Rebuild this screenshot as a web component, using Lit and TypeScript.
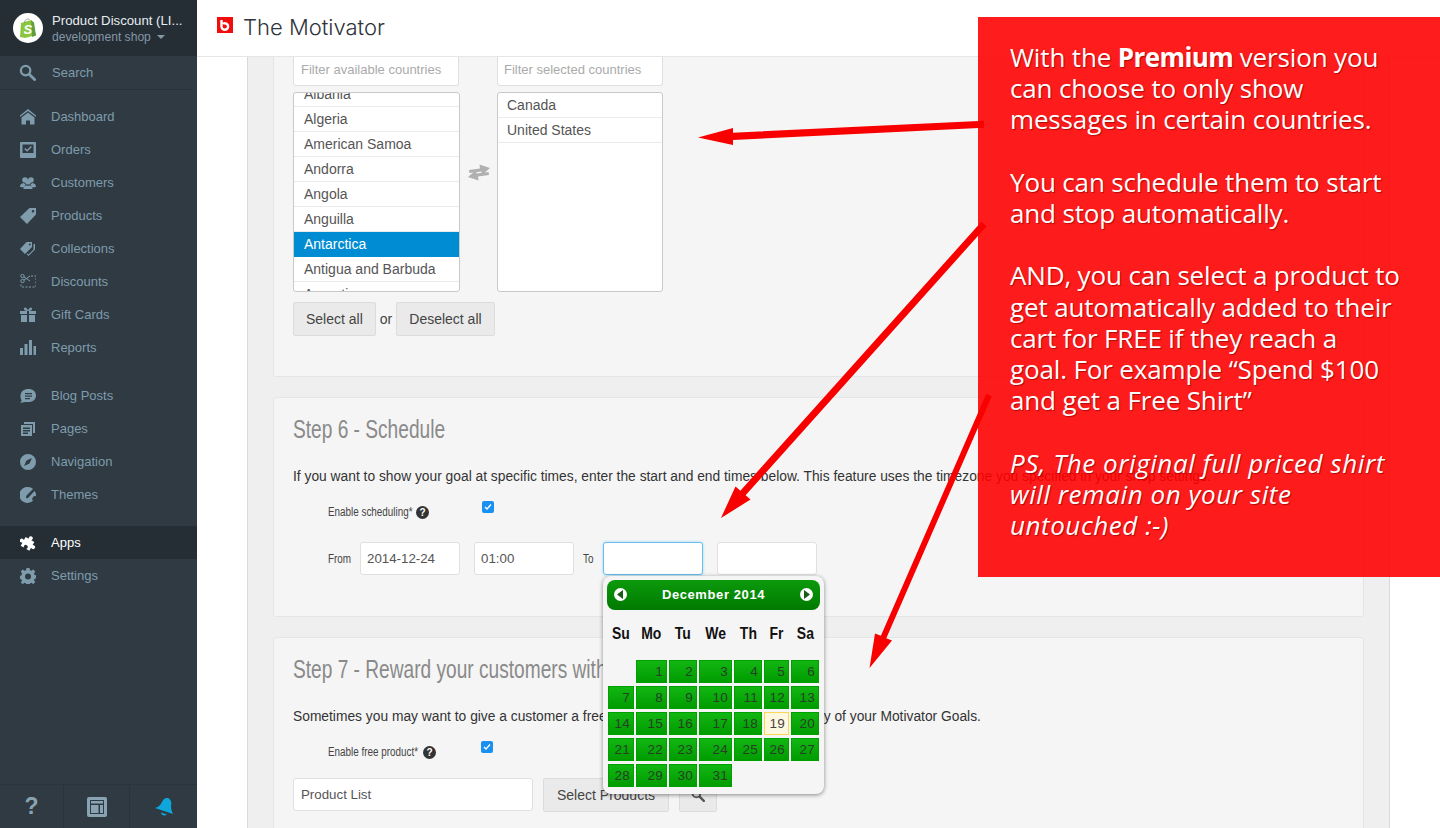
import { LitElement, html, css, svg } from "lit";
import { customElement } from "lit/decorators.js";

const I = {
  search: svg`<circle cx="7" cy="7" r="5" fill="none" stroke="currentColor" stroke-width="2.4"/><path d="M11 11l5.5 5.5" stroke="currentColor" stroke-width="3" stroke-linecap="round"/>`,
  home: svg`<path d="M8 0L0 6.500V8L8 2l8 6V6.500z"/><path d="M8 3.500L1.500 8.500V15.500h4.500v-4h4v4h4.500V8.500z"/>`,
  orders: svg`<path fill-rule="evenodd" d="M1 0h14a1 1 0 011 1v14a1 1 0 01-1 1H1a1 1 0 01-1-1V1a1 1 0 011-1zm1.500 2.500v8.500h11V2.500z"/><path d="M4.800 6.500l2.300 2.300 4.300-4.300" fill="none" stroke="currentColor" stroke-width="1.500"/>`,
  customers: svg`<circle cx="5" cy="5" r="2.800"/><circle cx="11" cy="5" r="2.800"/><path d="M0 12c0-3 2-3.500 3.500-4l1.500 1 1-.5C5 10 4.500 11 4.500 12.500zM16 12c0-3-2-3.500-3.500-4l-1.500 1-1-.5c1 1.500 1.500 2.500 1.500 4z"/><circle cx="8" cy="7" r="2.600"/><path d="M3.500 14c0-3 2.500-3.500 3-3.800l1.500.8 1.500-.8c.5.300 3 .8 3 3.800z"/>`,
  products: svg`<path fill-rule="evenodd" d="M9.500 0H16v6.500L7 16 0 9zM13 2a1.300 1.300 0 100 2.600A1.300 1.300 0 0013 2z"/>`,
  collections: svg`<path fill-rule="evenodd" d="M6.500 1H12v5l-7 7-5-5zM9.800 2.500a1 1 0 100 2 1 1 0 000-2z"/><path d="M13.500 3H15v5.500L8.500 15l-2-2 1-.5 1 1 5-5z"/>`,
  discounts: svg`<circle cx="2.500" cy="2" r="1.700" fill="none" stroke="currentColor"/><circle cx="2.500" cy="7" r="1.700" fill="none" stroke="currentColor"/><path d="M4 3l6 4M4 6l6-4" stroke="currentColor" fill="none"/><path d="M11 2h5v11H1v-3" fill="none" stroke="currentColor" stroke-dasharray="2 1.500"/>`,
  gift: svg`<path d="M0 4h7v3H0zM9 4h7v3H9zM1 8h6v7H1zM9 8h6v7H9z"/><path d="M8 4C6 4 3.500 3.500 4 1.500S7.500 1 8 4c.5-3 3.500-4.500 4-2.500S10 4 8 4z"/>`,
  reports: svg`<path d="M0 8h3v7H0zM4.500 4h3v11h-3zM9 0h3v15H9zM13.500 6H16v9h-2.500z"/>`,
  blog: svg`<path fill-rule="evenodd" d="M8.500 1C13 1 16 3.700 16 7.500S13 14 8.500 14H5l-5 1c1.500-1 1.500-2.500 1.500-3C.5 11 .5 9 .5 7.500.5 3.700 4 1 8.500 1zM5 5v1.300h7V5zM5 7.500v1.300h7V7.500zM5 10v1.200h5V10z"/>`,
  pages: svg`<path fill-rule="evenodd" d="M1 4h11v11H1zM3 6.500V8h7V6.500zM3 9v1.500h7V9zM3 11.500V13h5v-1.500z"/><path d="M4 1h11v11h-2V3H4z"/>`,
  nav: svg`<path fill-rule="evenodd" d="M8 0a8 8 0 110 16A8 8 0 018 0zm4 4L6.500 6.500 4 12l5.500-2.500z"/>`,
  themes: svg`<path d="M8 0c2 0 4 .7 5 2L6.500 8.500c-.8 1-.5 2.500.5 3l1.500-1L14.500 4c1 1.200 1.500 2.500 1.500 4 0 .6 0 1-.2 1.500-.5-.5-1.300-.5-2-.2l-1.500 2c-.3.800 0 1.700.8 2.200A8 8 0 118 0z"/>`,
  apps: svg`<path transform="rotate(30 8 8)" d="M6 2.500a2 2 0 114 0c0 .6-.3 1-.5 1.500H13v3.500c.5-.2 1-.5 1.500-.5a2 2 0 110 4c-.5 0-1-.3-1.500-.5V14H9.500c.2-.5.5-1 .5-1.500a2 2 0 10-4 0c0 .5.3 1 .5 1.500H3v-3.500c-.5.2-1 .5-1.500.5a2 2 0 110-4c.5 0 1 .3 1.500.5V4h3.500C6.300 3.500 6 3.100 6 2.500z"/>`,
  gear: svg`<path fill-rule="evenodd" d="M6.500 0h3l.4 2.200 1.500.6L13.200 1.500l2.100 2.100-1.300 1.800.6 1.500 2.200.4v3l-2.200.4-.6 1.500 1.300 1.800-2.100 2.100-1.800-1.300-1.500.6-.4 2.200h-3l-.4-2.200-1.500-.6-1.800 1.300L.7 14.500 2 12.700l-.6-1.500-2.200-.4v-3l2.200-.4L2 5.400.7 3.600l2.100-2.100 1.800 1.300 1.500-.6zM8 5.500a3 3 0 100 6 3 3 0 000-6z"/>`,
};

const nav1 = [["Dashboard", I.home], ["Orders", I.orders], ["Customers", I.customers], ["Products", I.products], ["Collections", I.collections], ["Discounts", I.discounts], ["Gift Cards", I.gift], ["Reports", I.reports]] as const;
const nav2 = [["Blog Posts", I.blog], ["Pages", I.pages], ["Navigation", I.nav], ["Themes", I.themes]] as const;
const nav3 = [["Apps", I.apps, true], ["Settings", I.gear, false]] as const;
const countries = ["Algeria", "American Samoa", "Andorra", "Angola", "Anguilla", "Antarctica", "Antigua and Barbuda", "Argentina"];

const calCols = [26, 31, 28, 33, 28, 25, 28];
const calWeeks: (number | null)[][] = [
  [null, 1, 2, 3, 4, 5, 6], [7, 8, 9, 10, 11, 12, 13], [14, 15, 16, 17, 18, 19, 20], [21, 22, 23, 24, 25, 26, 27], [28, 29, 30, 31, null, null, null],
];

@customElement("app-root")
export class AppRoot extends LitElement {
  static styles = css`
    :host { display: block; width: 1440px; height: 828px; overflow: hidden; position: relative; font-family: "Liberation Sans", Arial, sans-serif; background: #fff; }
    .app { display: grid; grid-template-columns: 197px 1fr; height: 828px; }
    .side { background: #2f3a42; display: flex; flex-direction: column; color: #7f9cad; font-size: 13px; }
    .shop { height: 56px; background: #252e35; display: flex; align-items: center; padding-left: 13px; gap: 9px; box-sizing: border-box; }
    .logo { width: 30px; height: 30px; border-radius: 50%; background: #fff; display: flex; align-items: center; justify-content: center; flex: none; }
    .shopname { color: #e8edf0; font-size: 13.200px; line-height: 17px; white-space: nowrap; }
    .shopsub { color: #8397a5; font-size: 12.100px; line-height: 16px; display: flex; align-items: center; gap: 6px; }
    .caret { width: 0; height: 0; border: 4px solid transparent; border-top: 4px solid #8397a5; border-bottom: 0; }
    .search { height: 33px; display: flex; align-items: center; padding-left: 19px; gap: 16px; border-bottom: 1px solid #28323a; margin-right: 5px; margin-bottom: 10px; }
    .search svg { width: 17px; height: 17px; }
    .item { height: 33px; display: flex; align-items: center; padding-left: 20px; gap: 15px; }
    .item svg { width: 16px; height: 16px; fill: currentColor; flex: none; }
    .item.on { background: #252e35; color: #fff; }
    .spacer { height: 15px; }
    .foot { margin-top: auto; height: 43px; display: grid; grid-template-columns: 64px 66px 67px; border-top: 1px solid #2a343b; }
    .foot div { display: flex; align-items: center; justify-content: center; border-right: 1px solid #2a343b; }
    .foot div:last-child { border-right: 0; }
    .qm { font-size: 23px; font-weight: bold; color: #8aa3b3; }
    .main { display: flex; flex-direction: column; min-width: 0; height: 828px; }
    .top { height: 57px; flex: none; box-sizing: border-box; border-bottom: 1px solid #e6e6e6; display: flex; align-items: center; padding-left: 20px; gap: 10px; font-family: "Inter", sans-serif; font-size: 22px; font-weight: 300; color: #2d343a; }
    .blogo { width: 16px; height: 16px; background: #f20c0c; position: relative; top: -3px; display: flex; align-items: center; justify-content: center; }
    .ttl { position: relative; top: -1px; }
    .content { flex: 1; overflow: hidden; padding: 0 50px; }
    .wrap { border: 1px solid #d9d9d9; border-width: 0 1px; background: #efefef; padding: 0 25px 20px; height: 100%; box-sizing: border-box; display: flex; flex-direction: column; gap: 20px; }
    .card { background: #f5f5f5; border: 1px solid #e5e5e5; padding: 0 19px; flex: none; color: #333; font-size: 13px; border-radius: 3px; box-sizing: border-box; }
    .c1 { height: 320px; border-top: 0; border-radius: 0 0 3px 3px; }
    .c2 { height: 220px; }
    .c3 { height: 300px; }
    .input { background: #fff; border: 1px solid #e0e0e0; border-radius: 3px; box-sizing: border-box; height: 33px; font-size: 13.300px; display: flex; align-items: center; padding: 0 6px; color: #555; }
    .ph { color: #aaa; font-size: 13px; white-space: nowrap; }
    .duals { display: flex; }
    .col { width: 166px; }
    .filt { height: 29px; border-top: 0; border-radius: 0 0 3px 3px; padding: 0 7px; position: relative; }
    .filt .ph { position: relative; top: -2px; }
    .list { height: 200px; width: 167px; margin-top: 6px; background: #fff; border: 1px solid #c9c9c9; border-radius: 3px; box-sizing: border-box; overflow: hidden; font-size: 14px; color: #555; }
    .col.r .list { width: 166px; }
    .col.r .filt { padding-left: 6px; }
    .col.r .opt { padding-left: 9px; }
    .opt { height: 25px; box-sizing: border-box; border-bottom: 1px solid #ebebeb; display: flex; align-items: center; padding-left: 10px; white-space: nowrap; }
    .opt.sel { background: #008cd2; color: #fff; border-color: #008cd2; }
    .opt.cut { margin-top: -11px; }
    .swap { width: 38px; display: flex; align-items: flex-start; justify-content: center; padding: 106px 0 0 1px; box-sizing: border-box; }
    .btns { display: flex; align-items: center; gap: 4px; margin-top: 10px; font-size: 14px; color: #444; }
    .btn { background: #eaeaea; border: 1px solid #dcdcdc; border-radius: 2px; height: 34px; box-sizing: border-box; display: flex; align-items: center; padding: 0 12px; font-size: 14px; color: #444; white-space: nowrap; }
    h2 { font-family: "Liberation Sans", sans-serif; font-weight: 400; font-size: 25px; color: #8a8a8a; margin: 0; line-height: 30px; padding-top: 16px; white-space: nowrap; transform: scaleX(.765); transform-origin: left; }
    .desc { margin: 23px 0 0; font-size: 13.800px; line-height: 20px; color: #333; white-space: nowrap; }
    .lab { display: inline-block; font-size: 12.500px; color: #444; white-space: nowrap; transform: scaleX(.79); transform-origin: left; flex: none; }
    .w-sched { width: 88px; }
    .w-free { width: 95px; }
    .w-from { width: 32px; }
    .w-to { width: 11px; margin: 0 9px; }
    .en { display: flex; align-items: center; margin: 15px 0 0 35px; height: 20px; position: relative; }
    .en .q { width: 13px; height: 13px; border-radius: 50%; background: #333; color: #fff; font-size: 10px; font-weight: bold; display: inline-flex; align-items: center; justify-content: center; }
    .cb { width: 12px; height: 12px; border-radius: 2px; background: #1a90f0; display: flex; align-items: center; justify-content: center; position: absolute; top: -1px; left: 154px; }
    .cb.alt { left: 153px; }
    .sched { display: flex; align-items: center; margin: 20px 0 0 35px; }
    .sched .input { width: 100px; }
    .sched .gap { margin-left: 14px; }
    .sched .focus { border-color: #66bfee; box-shadow: 0 0 3px #9bd7f5; }
    .prod { display: flex; margin-top: 16px; align-items: flex-start; }
    .prod .input { width: 240px; padding: 0 7px; margin-right: 10px; }
    .prod .btn { padding: 0 13px; margin-right: 10px; }
    .prod .ic { width: 38px; justify-content: center; padding: 0; color: #555; }
    .over { position: absolute; left: 0; top: 0; pointer-events: none; }
    .red { position: absolute; left: 978px; top: 17px; width: 462px; height: 560px; background: rgba(255, 0, 0, .89); box-sizing: border-box; padding: 25px 32px; color: #fff; font-family: "Open Sans", sans-serif; font-size: 26px; line-height: 31.200px; text-shadow: 1px 1px 1px rgba(120,0,0,.6); letter-spacing: -.15px; }
    .red p { margin: 0 0 31.200px; white-space: nowrap; }
    .red b { letter-spacing: -.6px; }
    .red i { letter-spacing: .55px; }
    .cal { position: absolute; left: 603px; top: 576px; width: 221px; height: 218px; background: #f5f5f5; border-radius: 8px; box-shadow: 0 1px 4px rgba(0,0,0,.45); box-sizing: border-box; padding: 4px; }
    .calh { height: 30px; border-radius: 8px; background: linear-gradient(#0c9a0c, #007a00); color: #fff; font-weight: bold; font-size: 13px; display: flex; align-items: center; justify-content: space-between; padding: 0 7px 2px; box-sizing: border-box; letter-spacing: .6px; }
    .arr { width: 13px; height: 13px; border-radius: 50%; background: #fff; display: flex; align-items: center; justify-content: center; }
    table { border-collapse: separate; border-spacing: 2px 3px; table-layout: fixed; width: 215px; margin: 0; position: relative; left: -1px; }
    th { font-size: 17px; font-weight: bold; color: #111; height: 42px; padding: 0 0 2px; text-align: center; }
    th span { display: inline-block; transform: scaleX(.82); }
    td { height: 23px; padding: 0; }
    td b { display: block; height: 23px; box-sizing: border-box; border: 1px solid #00a000; background: linear-gradient(#12b612, #009c00); color: #263f26; font-weight: 400; font-size: 13.500px; text-align: right; line-height: 21px; padding-right: 3px; letter-spacing: .3px; }
    td b.today { background: #fff7e0; border-color: #fbd850; color: #444; }
  `;

  render() {
    const check = svg`<path d="M1 4l2 2 4-4.500" fill="none" stroke="#fff" stroke-width="1.300"/>`;
    return html`
      <div class="app">
        <aside class="side">
          <div class="shop">
            <div class="logo"><svg width="17" height="20" viewBox="0 0 17 20"><path d="M1 5l10-3 5 15-11 3-5-1z" fill="#8cc63f"/><path d="M11 2l1 17 4-1.500-2-13z" fill="#5e9e3e"/><path d="M4.500 5c0-4 4-5 5-3" fill="none" stroke="#8a8a8a" stroke-width=".8"/><text x="3.500" y="15.500" font-size="13" font-family="Liberation Sans" font-weight="bold" font-style="italic" fill="#fff">S</text></svg></div>
            <div>
              <div class="shopname">Product Discount (LI...</div>
              <div class="shopsub">development shop <i class="caret"></i></div>
            </div>
          </div>
          <div class="search"><svg viewBox="0 0 18 18">${I.search}</svg><span>Search</span></div>
          ${nav1.map(([n, i]) => html`<div class="item"><svg viewBox="0 0 16 16">${i}</svg>${n}</div>`)}
          <div class="spacer"></div>
          ${nav2.map(([n, i]) => html`<div class="item"><svg viewBox="0 0 16 16">${i}</svg>${n}</div>`)}
          <div class="spacer"></div>
          ${nav3.map(([n, i, on]) => html`<div class="item ${on ? "on" : ""}"><svg viewBox="0 0 16 16">${i}</svg>${n}</div>`)}
          <div class="foot">
            <div><span class="qm">?</span></div>
            <div><svg width="20" height="20" viewBox="0 0 20 20"><rect width="20" height="20" rx="2" fill="#8aa3b3"/><path d="M3 3h14v14H3z" fill="#2f3a42"/><path d="M4 4h12v2.500H4zM4 8h7.500v8H4zM13 8h3v8h-3z" fill="#8aa3b3"/></svg></div>
            <div><svg width="20" height="20" viewBox="0 0 20 20" fill="#0fa6dc"><path d="M1 11C5 10 7 7 8 5 9 2 12 0 15 1.500 17 3 18 6 17 9 17 12 18 15 19 17z"/><path d="M7 15.500c0 3 4 4 6 2z"/></svg></div>
          </div>
        </aside>
        <div class="main">
          <header class="top">
            <div class="blogo"><svg width="10" height="12" viewBox="0 0 10 12"><path d="M1.500 1v6.500a3.300 3.300 0 106.600 0 3.300 3.300 0 00-5-2.800" fill="none" stroke="#fff" stroke-width="2.400"/></svg></div>
            <span class="ttl">The Motivator</span>
          </header>
          <div class="content">
            <div class="wrap">
              <section class="card c1">
                <div class="duals">
                  <div class="col">
                    <div class="input filt"><span class="ph">Filter available countries</span></div>
                    <div class="list">
                      <div class="opt cut">Albania</div>
                      ${countries.map((c) => html`<div class="opt ${c === "Antarctica" ? "sel" : ""}">${c}</div>`)}
                    </div>
                  </div>
                  <div class="swap"><svg width="22" height="19" viewBox="0 0 22 19" fill="#b0b0b0"><path d="M1 7l11-1.500L11.500 1.500 22 5l-8 7-.6-3.500-12 1.500z"/><path d="M21 12l-11 1.500.5 4L0 14l8-7 .6 3.500 12-1.500z"/></svg></div>
                  <div class="col r">
                    <div class="input filt"><span class="ph">Filter selected countries</span></div>
                    <div class="list">
                      <div class="opt">Canada</div>
                      <div class="opt">United States</div>
                    </div>
                  </div>
                </div>
                <div class="btns"><span class="btn">Select all</span> or <span class="btn">Deselect all</span></div>
              </section>
              <section class="card c2">
                <h2>Step 6 - Schedule</h2>
                <p class="desc">If you want to show your goal at specific times, enter the start and end times below. This feature uses the timezone you specified in your shop settings.</p>
                <div class="en"><span class="lab w-sched">Enable scheduling*</span><span class="q">?</span><span class="cb"><svg width="8" height="8" viewBox="0 0 8 8">${check}</svg></span></div>
                <div class="sched">
                  <span class="lab w-from">From</span><div class="input">2014-12-24</div>
                  <div class="input gap">01:00</div>
                  <span class="lab w-to">To</span><div class="input focus"></div>
                  <div class="input gap"></div>
                </div>
              </section>
              <section class="card c3">
                <h2>Step 7 - Reward your customers with free products</h2>
                <p class="desc">Sometimes you may want to give a customer a free product when they reach one or any of your Motivator Goals.</p>
                <div class="en"><span class="lab w-free">Enable free product*</span><span class="q">?</span><span class="cb alt"><svg width="8" height="8" viewBox="0 0 8 8">${check}</svg></span></div>
                <div class="prod"><div class="input">Product List</div><span class="btn">Select Products</span><span class="btn ic"><svg width="14" height="14" viewBox="0 0 18 18">${I.search}</svg></span></div>
              </section>
            </div>
          </div>
        </div>
      </div>

      <div class="red">
        <p>With the <b>Premium</b> version you<br />can choose to only show<br />messages in certain countries.</p>
        <p>You can schedule them to start<br />and stop automatically.</p>
        <p>AND, you can select a product to<br />get automatically added to their<br />cart for FREE if they reach a<br />goal. For example “Spend $100<br />and get a Free Shirt”</p>
        <p><i>PS, The original full priced shirt<br />will remain on your site<br />untouched :-)</i></p>
      </div>

      <svg class="over" width="1440" height="828" viewBox="0 0 1440 828" fill="#f80000">
        <path d="M698 137.500L733 128V132.700L984 120.700V127.700L733 140V145Z"/>
        <path d="M721 518L735.500 486.400L740.400 490.700L981.400 221.700L986.600 226.300L745.600 495.300L750.500 499.600Z"/>
        <path d="M869.500 668L875 633.400L880.900 635.800L986.300 393.800L991.700 396.200L886.300 638.200L892 640.600Z"/>
      </svg>

      <div class="cal">
        <div class="calh">
          <span class="arr"><svg width="7" height="9" viewBox="0 0 7 9"><path d="M6 0v9L0 4.500z" fill="#165c16"/></svg></span>
          December 2014
          <span class="arr"><svg width="7" height="9" viewBox="0 0 7 9"><path d="M1 0v9l6-4.500z" fill="#165c16"/></svg></span>
        </div>
        <table>
          <colgroup>${calCols.map((w) => html`<col style="width:${w}px" />`)}</colgroup>
          <thead><tr>${["Su", "Mo", "Tu", "We", "Th", "Fr", "Sa"].map((d) => html`<th><span>${d}</span></th>`)}</tr></thead>
          <tbody>${calWeeks.map((w) => html`<tr>${w.map((d) => html`<td>${d ? html`<b class="${d === 19 ? "today" : ""}">${d}</b>` : ""}</td>`)}</tr>`)}</tbody>
        </table>
      </div>
    `;
  }
}
